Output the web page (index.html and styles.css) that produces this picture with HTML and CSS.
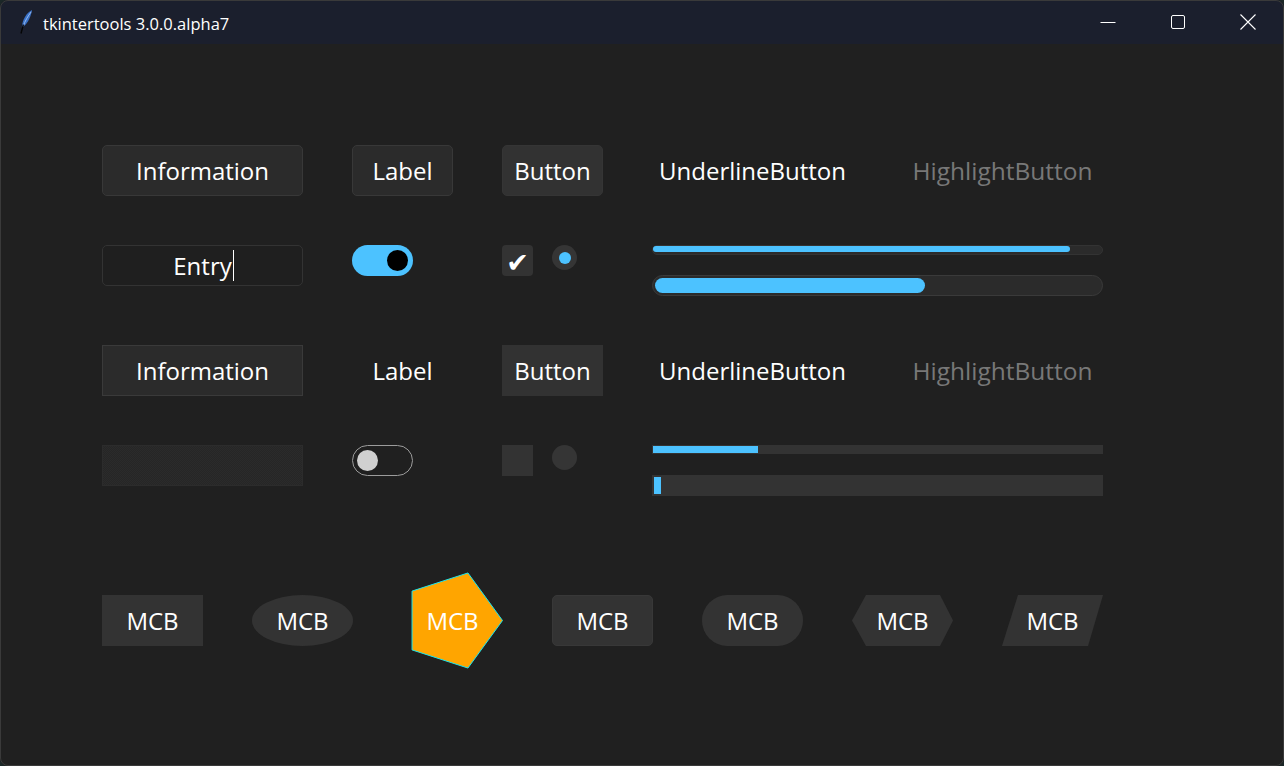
FILE: index.html
```html
<!DOCTYPE html>
<html lang="en">
<head>
<meta charset="utf-8">
<title>tkintertools 3.0.0.alpha7</title>
<link rel="stylesheet" href="styles.css">
</head>
<body>
<div class="window">
  <header class="titlebar">
    <svg class="app-icon" viewBox="0 0 16 26" width="16" height="26">
      <path d="M14 1 C8.5 4 4.5 10 3.8 18.5 C8 16.5 12.5 10 14 1 Z" fill="#3b72c8"/>
      <path d="M13.2 2.8 C10 7 7 12 5 17.5" stroke="#a4c4f2" stroke-width="0.9" fill="none"/>
      <path d="M5.4 15.5 L3 24.5" stroke="#050505" stroke-width="1.4" fill="none"/>
    </svg>
    <span class="title">tkintertools 3.0.0.alpha7</span>
    <div class="controls">
      <div class="ctl"><svg width="16" height="16" viewBox="0 0 16 16"><path d="M0.5 8.5 H15.5" stroke="#fff" stroke-width="1"/></svg></div>
      <div class="ctl"><svg width="16" height="16" viewBox="0 0 16 16"><rect x="1.5" y="1.5" width="13" height="13" rx="1.5" stroke="#fff" stroke-width="1" fill="none"/></svg></div>
      <div class="ctl"><svg width="16" height="16" viewBox="0 0 16 16"><path d="M0.5 0.5 L15.5 15.5 M15.5 0.5 L0.5 15.5" stroke="#fff" stroke-width="1.1"/></svg></div>
    </div>
  </header>
  <main class="canvas">
    <div class="grid">
      <!-- row 1 -->
      <div class="box w201 c1 r1 info-r">Information</div>
      <div class="box w101 c6 r1 info-r">Label</div>
      <div class="box w101 c9 r1 btn-r">Button</div>
      <div class="box w201 c12 r1 plain">UnderlineButton</div>
      <div class="box w201 c17 r1 plain dim">HighlightButton</div>

      <!-- row 2 -->
      <div class="entry c1 r2"><span class="entry-text">Entry</span><span class="caret"></span></div>
      <div class="switch on c6 r2"><span class="knob"></span></div>
      <div class="check on c9 r2">✔</div>
      <div class="radio on c10 r2"><span class="dot"></span></div>
      <div class="progress c12 r2">
        <div class="bar thin"><div class="fill" style="width:93.3%"></div></div>
        <div class="bar thick"><div class="fill" style="width:60.7%"></div></div>
      </div>

      <!-- row 3 -->
      <div class="box w201 c1 r3 info-s">Information</div>
      <div class="box w101 c6 r3 plain">Label</div>
      <div class="box w101 c9 r3 btn-s">Button</div>
      <div class="box w201 c12 r3 plain">UnderlineButton</div>
      <div class="box w201 c17 r3 plain dim">HighlightButton</div>

      <!-- row 4 -->
      <div class="entry off c1 r4"></div>
      <div class="switch off c6 r4"><span class="knob"></span></div>
      <div class="check off c9 r4"></div>
      <div class="radio off c10 r4"></div>
      <div class="progress c12 r4">
        <div class="bar thin flat"><div class="fill" style="width:23.4%"></div></div>
        <div class="bar thick flat"><div class="fill" style="width:1.6%"></div></div>
      </div>

      <!-- row 5: MCB shapes -->
      <div class="mcb c1 r5 rect">MCB</div>
      <div class="mcb c4 r5 oval">MCB</div>
      <div class="mcb c7 r5 penta">
        <svg class="penta-shape" viewBox="0 -25 101 101" width="101" height="101">
          <polygon points="100.5,25.5 65.95,73.05 10.05,54.9 10.05,-3.9 65.95,-22.05" fill="#ffa500" stroke="#19e6f0" stroke-width="1"/>
        </svg>
        <span class="penta-text">MCB</span>
      </div>
      <div class="mcb c10 r5 rounded">MCB</div>
      <div class="mcb c13 r5 pill">MCB</div>
      <div class="mcb c16 r5 hexa">MCB</div>
      <div class="mcb c19 r5 para">MCB</div>
    </div>
  </main>
</div>
</body>
</html>
```
FILE: styles.css
```css
* {
  box-sizing: border-box;
  margin: 0;
  padding: 0;
}

html, body {
  width: 1284px;
  height: 766px;
  overflow: hidden;
  background: #1b2727;
}

body {
  font-family: "Open Sans", "Noto Sans", sans-serif;
  color: #ffffff;
}

.window {
  width: 1284px;
  height: 766px;
  border-radius: 8px;
  overflow: hidden;
  background: #202020;
  outline: 1px solid #3a3a3a;
  outline-offset: -1px;
  display: flex;
  flex-direction: column;
}

/* title bar */
.titlebar {
  height: 44px;
  flex: none;
  background: #1b1f2d;
  display: flex;
  align-items: center;
}

.app-icon {
  margin-left: 18px;
  flex: none;
}

.title {
  margin-left: 9px;
  padding-top: 2px;
  font-size: 16.5px;
  color: #ffffff;
}

.controls {
  margin-left: auto;
  height: 100%;
  display: flex;
  padding-right: 1px;
}

.ctl {
  width: 70px;
  height: 100%;
  display: flex;
  align-items: center;
  justify-content: center;
}

.ctl svg {
  display: block;
}

/* canvas */
.canvas {
  flex: 1;
  padding: 101px 0 0 102px;
}

.grid {
  display: grid;
  grid-template-columns: repeat(20, 50px);
  grid-template-rows: 100px 100px 100px 150px 51px;
  align-items: start;
  justify-items: start;
}

.c1 { grid-column-start: 1; }
.c4 { grid-column-start: 4; }
.c6 { grid-column-start: 6; }
.c7 { grid-column-start: 7; }
.c9 { grid-column-start: 9; }
.c10 { grid-column-start: 10; }
.c12 { grid-column-start: 12; }
.c13 { grid-column-start: 13; }
.c16 { grid-column-start: 16; }
.c17 { grid-column-start: 17; }
.c19 { grid-column-start: 19; }

.r1 { grid-row-start: 1; }
.r2 { grid-row-start: 2; }
.r3 { grid-row-start: 3; }
.r4 { grid-row-start: 4; }
.r5 { grid-row-start: 5; }

/* text boxes */
.box {
  height: 51px;
  display: flex;
  align-items: center;
  justify-content: center;
  font-size: 24px;
  white-space: nowrap;
}

.w201 { width: 201px; }
.w101 { width: 101px; }

.info-r {
  background: #2b2b2b;
  border: 1px solid #383838;
  border-radius: 5px;
}

.btn-r {
  background: #323232;
  border: 1px solid #353535;
  border-radius: 5px;
}

.info-s {
  background: #2b2b2b;
  border: 1px solid #3a3a3a;
}

.btn-s {
  background: #323232;
}

.dim {
  color: #787878;
  font-size: 24.5px;
}

/* entry */
.entry {
  width: 201px;
  height: 41px;
  border: 1px solid #333333;
  border-radius: 5px;
  background: #1f1f1f;
  display: flex;
  align-items: center;
  justify-content: center;
  font-size: 24px;
}

.caret {
  width: 1px;
  height: 31px;
  background: #ffffff;
  margin-left: 1px;
  margin-right: -2px;
}

.entry.off {
  border: 1px solid #2c2c2c;
  border-radius: 0;
  background: repeating-conic-gradient(#2b2b2b 0 25%, #262626 0 50%) 0 0 / 2px 2px;
}

/* switch */
.switch {
  width: 61px;
  height: 31px;
  border-radius: 16px;
  display: flex;
  align-items: center;
}

.switch.on {
  background: #4cc2ff;
  justify-content: flex-end;
  padding-right: 5px;
}

.switch.off {
  border: 1px solid #9c9c9c;
  background: #202020;
  justify-content: flex-start;
  padding-left: 4px;
}

.knob {
  width: 21px;
  height: 21px;
  border-radius: 50%;
}

.switch.on .knob { background: #000000; }
.switch.off .knob { background: #d0d0d0; }

/* checkbox */
.check {
  width: 31px;
  height: 31px;
  background: #333333;
  display: flex;
  align-items: center;
  justify-content: center;
  font-family: "DejaVu Sans", sans-serif;
  font-size: 27px;
  color: #ffffff;
  line-height: 1;
  padding-top: 3px;
}

.check.on { border-radius: 4px; }

/* radio */
.radio {
  width: 25px;
  height: 25px;
  border-radius: 50%;
  background: #353535;
  display: flex;
  align-items: center;
  justify-content: center;
}

.dot {
  width: 12px;
  height: 12px;
  border-radius: 50%;
  background: #4cc2ff;
}

/* progress bars */
.progress {
  width: 451px;
  display: flex;
  flex-direction: column;
  gap: 20px;
}

.bar {
  width: 100%;
}

.bar .fill {
  height: 100%;
  background: #4cc2ff;
}

.bar.thin {
  height: 10px;
  padding: 1px;
  border: 1px solid #333333;
  border-radius: 5px;
  background: #2b2b2b;
}

.bar.thin .fill {
  border-radius: 4px;
  margin: -1px 0 0 -1px;
}

.bar.thick {
  height: 21px;
  padding: 2px;
  border: 1px solid #3a3a3a;
  border-radius: 11px;
  background: #2b2b2b;
}

.bar.thick .fill {
  border-radius: 8px;
}

.bar.thin.flat {
  height: 9px;
  border: none;
  border-radius: 0;
  background: #333333;
}

.bar.thin.flat .fill {
  margin: 0;
  border-radius: 0;
}

.bar.thick.flat {
  border: none;
  border-radius: 0;
  background: #333333;
  margin-top: 1px;
}

.bar.thick.flat .fill {
  border-radius: 0;
}

/* MCB shapes */
.mcb {
  width: 101px;
  height: 51px;
  display: flex;
  align-items: center;
  justify-content: center;
  font-size: 24px;
  background: #333333;
}

.mcb.oval { border-radius: 50%; }

.mcb.rounded {
  border-radius: 5px;
  border: 1px solid #383838;
}

.mcb.pill { border-radius: 26px; }

.mcb.hexa {
  clip-path: polygon(0 50%, 14px 0, calc(100% - 13px) 0, 100% 50%, calc(100% - 13px) 100%, 14px 100%);
}

.mcb.para {
  clip-path: polygon(16px 0, 100% 0, calc(100% - 15px) 100%, 0 100%);
}

.mcb.penta {
  position: relative;
  background: transparent;
}

.penta-shape {
  position: absolute;
  left: 0;
  top: -25px;
  overflow: visible;
}

.penta-text {
  position: relative;
}
```
